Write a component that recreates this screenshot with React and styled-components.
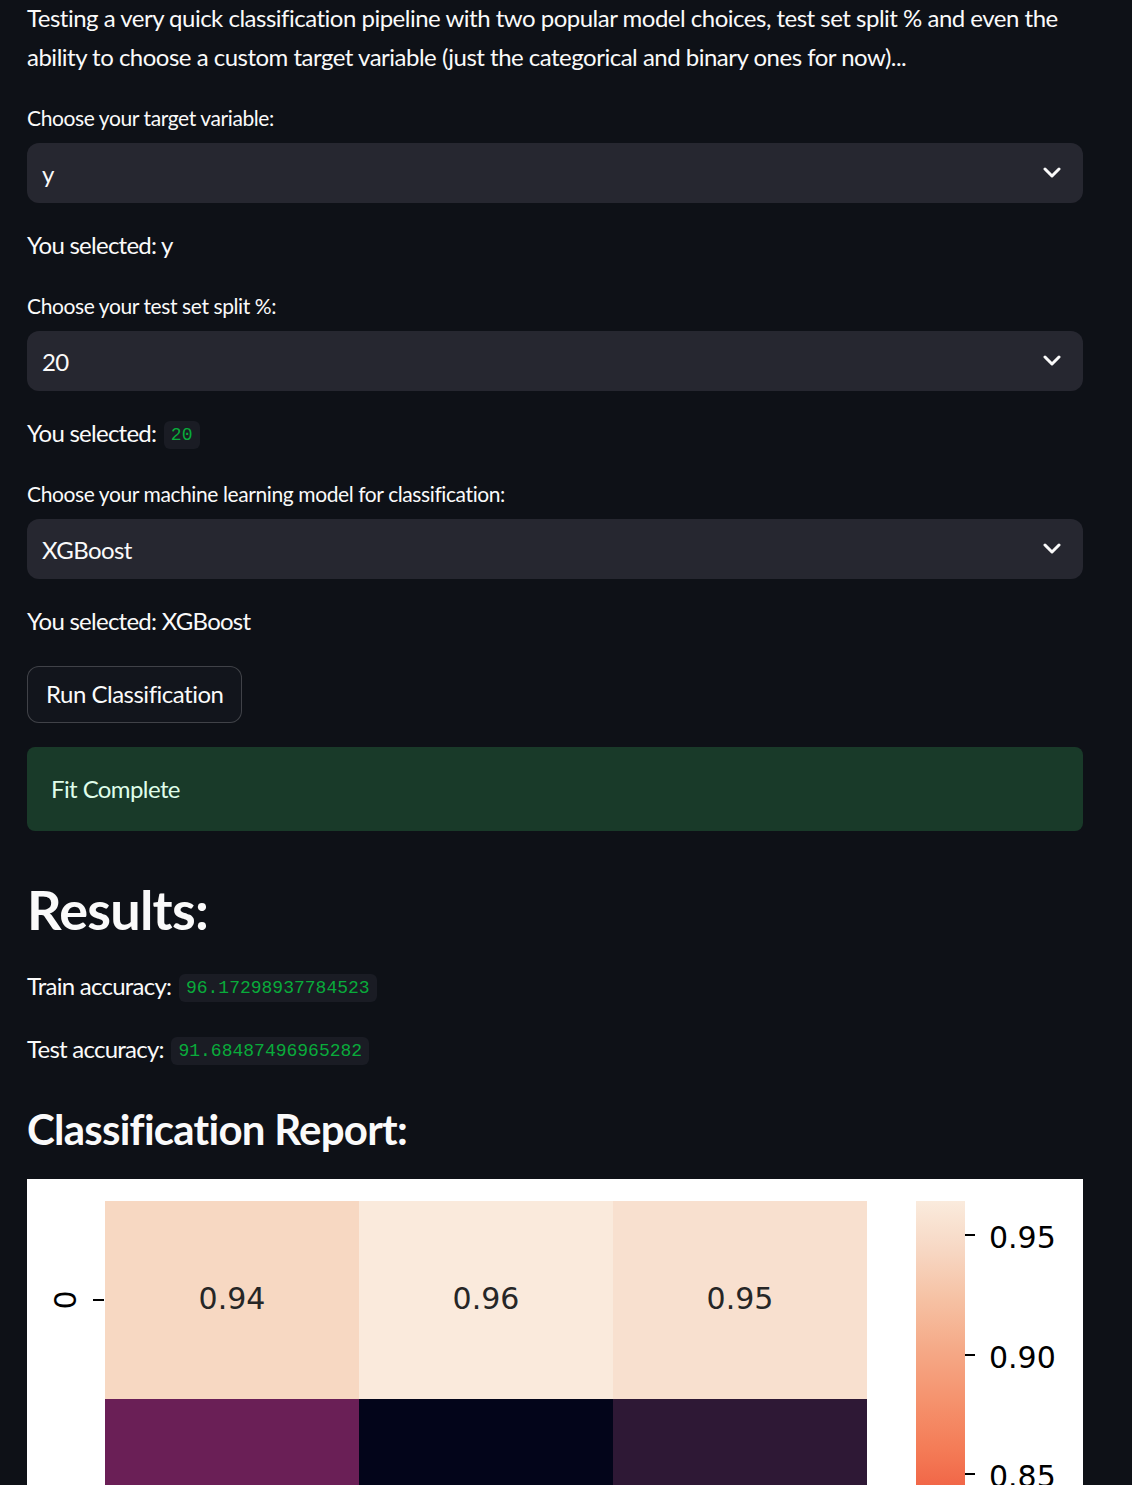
import styled, { createGlobalStyle } from "styled-components"

const GlobalStyle = createGlobalStyle`
    body {
        margin: 0;
        background: #0e1117;
        color: #fafafa;
        font-family: Lato, "Noto Sans", sans-serif;
        overflow: hidden;
    }
`

const Main = styled.div`
    width: 1056px;
    padding-left: 27px;
    display: flex;
    flex-direction: column;
    gap: 24px;
`

const Intro = styled.p`
    margin: -2px 0 0;
    padding-bottom: 2px;
    font-size: 24px;
    line-height: 39px;
    letter-spacing: -0.5px;
`

const Field = styled.div`
    display: flex;
    flex-direction: column;
    gap: 7px;
`

const Label = styled.label`
    font-size: 21px;
    line-height: 32px;
    padding-bottom: 2px;
    letter-spacing: -0.4px;
`

const Select = styled.div`
    height: 60px;
    background: #262730;
    border-radius: 12px;
    display: flex;
    align-items: center;
    justify-content: space-between;
    padding: 0 22px 0 15px;
    font-size: 24px;
    letter-spacing: -0.6px;
`

const Text = styled.div`
    font-size: 24px;
    line-height: 35px;
    padding-bottom: 4px;
    letter-spacing: -0.75px;
`

const Code = styled.code`
    font-family: "Liberation Mono", monospace;
    font-size: 18px;
    line-height: 21.6px;
    letter-spacing: 0;
    color: #09ab3b;
    background: #1a1c24;
    border-radius: 6px;
    padding: 3.6px 7.2px;
    margin-left: 2px;
    vertical-align: 2px;
`

const Button = styled.button`
    align-self: flex-start;
    height: 57px;
    padding: 0 18px 2px;
    background: #12151c;
    border: 1px solid rgba(250, 250, 250, 0.2);
    border-radius: 12px;
    color: #fafafa;
    font-family: inherit;
    font-size: 24px;
    letter-spacing: -0.5px;
`

const Alert = styled.div`
    height: 84px;
    box-sizing: border-box;
    padding: 0 24px 2px;
    display: flex;
    align-items: center;
    background: #193a29;
    border-radius: 8px;
    color: #dffde9;
    font-size: 24px;
    letter-spacing: -0.6px;
`

const Heading = styled.h2`
    margin: 0;
    padding: ${p => p.$pad};
    font-size: ${p => p.$size}px;
    line-height: ${p => p.$lh}px;
    letter-spacing: -0.75px;
    font-weight: 700;
`

const Figure = styled.div`
    background: #ffffff;
    height: 1060px;
`

const Chevron = () => (
    <svg width="18" height="12" viewBox="0 0 18 12">
        <path d="M2 2 L9 9 L16 2" fill="none" stroke="#fafafa" strokeWidth="3" strokeLinecap="round" strokeLinejoin="round" />
    </svg>
)

const SelectBox = ({ label, value }) => (
    <Field>
        <Label>{label}</Label>
        <Select>
            <span>{value}</span>
            <Chevron />
        </Select>
    </Field>
)

const rows = [
    { name: "0", cells: [["0.94", "#f7d8c2", "#262626"], ["0.96", "#faeadc", "#262626"], ["0.95", "#f8e0cf", "#262626"]] },
    { name: "1", cells: [["0.68", "#6a1f56", "#ffffff"], ["0.55", "#03051a", "#ffffff"], ["0.6", "#2e1835", "#ffffff"]] },
    { name: "accuracy", cells: [["0.92", "#f5a987", "#262626"], ["0.92", "#f5a987", "#262626"], ["0.92", "#f5a987", "#262626"]] },
    { name: "macro avg", cells: [["0.81", "#db2d46", "#ffffff"], ["0.76", "#a31a5b", "#ffffff"], ["0.78", "#c01758", "#ffffff"]] },
    { name: "weighted avg", cells: [["0.91", "#f5b092", "#262626"], ["0.92", "#f5a987", "#262626"], ["0.91", "#f5b092", "#262626"]] },
]

const ticks = [["0.95", 56], ["0.90", 176], ["0.85", 295], ["0.80", 415], ["0.75", 535], ["0.70", 655], ["0.65", 775], ["0.60", 895]]

const Heatmap = () => (
    <svg width="1056" height="1060" fontFamily="'DejaVu Sans', sans-serif">
        <defs>
            <linearGradient id="rocket" x1="0" y1="0" x2="0" y2="1">
                <stop offset="0" stopColor="#faebdd" />
                <stop offset="0.05" stopColor="#f7d7c3" />
                <stop offset="0.1" stopColor="#f6c1a3" />
                <stop offset="0.15" stopColor="#f5a987" />
                <stop offset="0.2" stopColor="#f5936e" />
                <stop offset="0.25" stopColor="#f47c57" />
                <stop offset="0.3" stopColor="#f06043" />
                <stop offset="0.4" stopColor="#e13342" />
                <stop offset="0.5" stopColor="#b9185a" />
                <stop offset="0.6" stopColor="#921c5b" />
                <stop offset="0.7" stopColor="#6b1f56" />
                <stop offset="0.8" stopColor="#451c47" />
                <stop offset="0.9" stopColor="#221331" />
                <stop offset="1" stopColor="#03051a" />
            </linearGradient>
        </defs>
        {rows.map((row, r) => (
            <g key={row.name}>
                {row.cells.map(([v, bg, fg], c) => (
                    <g key={c}>
                        <rect x={78 + c * 254} y={22 + r * 198} width="254" height="198" fill={bg} />
                        <text x={78 + c * 254 + 127} y={22 + r * 198 + 97} fill={fg} fontSize="30" textAnchor="middle" dominantBaseline="central">{v}</text>
                    </g>
                ))}
                <line x1="66" x2="77" y1={121 + r * 198} y2={121 + r * 198} stroke="#000" strokeWidth="2" />
                <text transform={`translate(38 ${121 + r * 198}) rotate(-90)`} fontSize="30" textAnchor="middle" dominantBaseline="central" fill="#000">{row.name}</text>
            </g>
        ))}
        <rect x="889" y="22" width="49" height="990" fill="url(#rocket)" />
        {ticks.map(([t, y]) => (
            <g key={t}>
                <line x1="938" x2="948" y1={y} y2={y} stroke="#000" strokeWidth="2" />
                <text x="962" y={y + 2} fontSize="30" dominantBaseline="central" fill="#000">{t}</text>
            </g>
        ))}
    </svg>
)

const App = () => {
    return (
        <>
            <GlobalStyle />
            <Main>
                <Intro>
                    Testing a very quick classification pipeline with two popular model choices, test set split % and even the ability to choose a custom target variable (just the categorical and binary ones for now)...
                </Intro>
                <SelectBox label="Choose your target variable:" value="y" />
                <Text>You selected: y</Text>
                <SelectBox label="Choose your test set split %:" value="20" />
                <Text>You selected: <Code>20</Code></Text>
                <SelectBox label="Choose your machine learning model for classification:" value="XGBoost" />
                <Text>You selected: XGBoost</Text>
                <Button>Run Classification</Button>
                <Alert>Fit Complete</Alert>
                <Heading $size={54} $lh={48} $pad="31px 0 10px">Results:</Heading>
                <Text>Train accuracy: <Code>96.17298937784523</Code></Text>
                <Text>Test accuracy: <Code>91.68487496965282</Code></Text>
                <Heading $size={42} $lh={42} $pad="14px 0 5px">Classification Report:</Heading>
                <Figure>
                    <Heatmap />
                </Figure>
            </Main>
        </>
    )
}

export default App
